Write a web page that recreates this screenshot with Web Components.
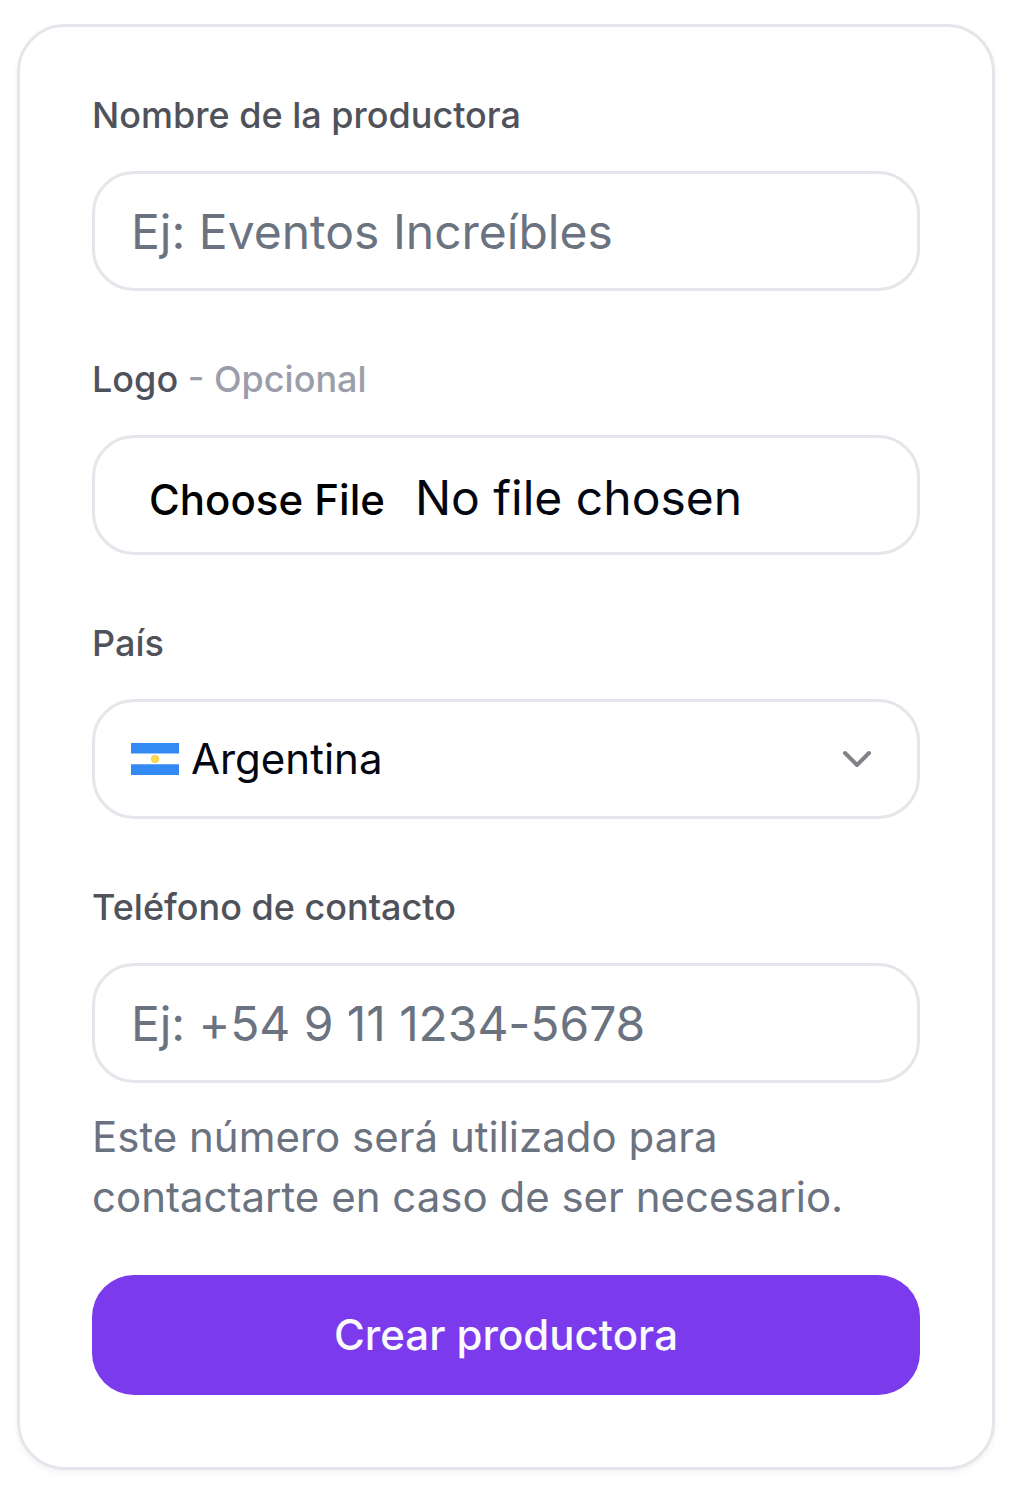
<!DOCTYPE html>
<html lang="es"><head><meta charset="utf-8"><title>Crear productora</title>
<style>
body{margin:0;background:#fff;font-family:Inter,"Liberation Sans",sans-serif;color:#030712}
</style></head><body>
<producer-form></producer-form>
<script>
const define=(name,html)=>customElements.define(name,class extends HTMLElement{
  constructor(){super();this.attachShadow({mode:'open'}).innerHTML=html;}
});
define('form-field',`<style>
:host{display:block;margin-bottom:60px}
.label{height:56px;line-height:56px;font-size:36px;font-weight:500;color:#50525b;margin-bottom:28px;white-space:nowrap}
::slotted([slot=optional]){color:#9b9eaa}
</style><div class="label"><slot name="label"></slot><slot name="optional"></slot></div><slot></slot>`);
define('input-box',`<style>
:host{display:flex;align-items:center;box-sizing:border-box;height:120px;padding:0 36px;border:3px solid #e5e6eb;border-radius:42px;background:#fff;font-size:48px;line-height:72px;white-space:nowrap}
:host([hint]){color:#6b7280;padding-top:2px}
:host([phone]){letter-spacing:-.07px}
</style><slot></slot>`);
define('file-picker',`<style>
:host{display:flex;align-items:baseline;gap:30px;padding:8px 0 0 18px}
b{font-size:42px;font-weight:500;color:#000}
</style><b>Choose File</b><span>No file chosen</span>`);
define('country-select',`<style>
:host{display:flex;align-items:center;flex:1;font-size:42px}
.flag{width:48px;height:32px;margin-right:12px}.arrow{width:48px;height:48px;margin-left:auto}
</style><svg class="flag" viewBox="0 0 48 32"><path fill="#fff" d="M0 0h48v32H0z"/><path fill="#338af3" d="M0 0h48v10.4H0zM0 21.3h48V32H0z"/><circle cx="24" cy="16" r="3.8" fill="#ffda44" stroke="#e5bf42" stroke-width=".5"/></svg><span>Argentina</span><svg class="arrow" viewBox="0 0 24 24" fill="none" stroke="#818389" stroke-width="2" stroke-linecap="round" stroke-linejoin="round"><path d="m6 9 6 6 6-6"/></svg>`);
define('submit-button',`<style>
:host{display:block}
button{display:block;width:100%;height:120px;border:0;padding:0;border-radius:42px;background:#7c3aed;color:#f9fafb;font:500 42px/60px Inter,"Liberation Sans",sans-serif}
</style><button><slot></slot></button>`);
define('producer-form',`<style>
:host{display:block;padding:24px 14px 38px 17px}
section{box-sizing:border-box;height:1446px;padding:60px 72px 0;border:3px solid #e5e6eb;border-radius:48px;box-shadow:0 3px 6px rgb(0 0 0 / .05)}
.last{margin-bottom:0}
p{margin:24px 0 48px;font-size:42px;line-height:60px;color:#6b7280;white-space:nowrap}
</style><section>
<form-field><span slot="label">Nombre de la productora</span><input-box hint>Ej: Eventos Increíbles</input-box></form-field>
<form-field><span slot="label">Logo&nbsp;</span><span slot="optional">- Opcional</span><input-box><file-picker></file-picker></input-box></form-field>
<form-field><span slot="label">País</span><input-box><country-select></country-select></input-box></form-field>
<form-field class="last"><span slot="label">Teléfono de contacto</span><input-box hint phone>Ej: +54 9 11 1234-5678</input-box></form-field>
<p>Este número será utilizado para<br>contactarte en caso de ser necesario.</p>
<submit-button>Crear productora</submit-button></section>`);
</script></body></html>
